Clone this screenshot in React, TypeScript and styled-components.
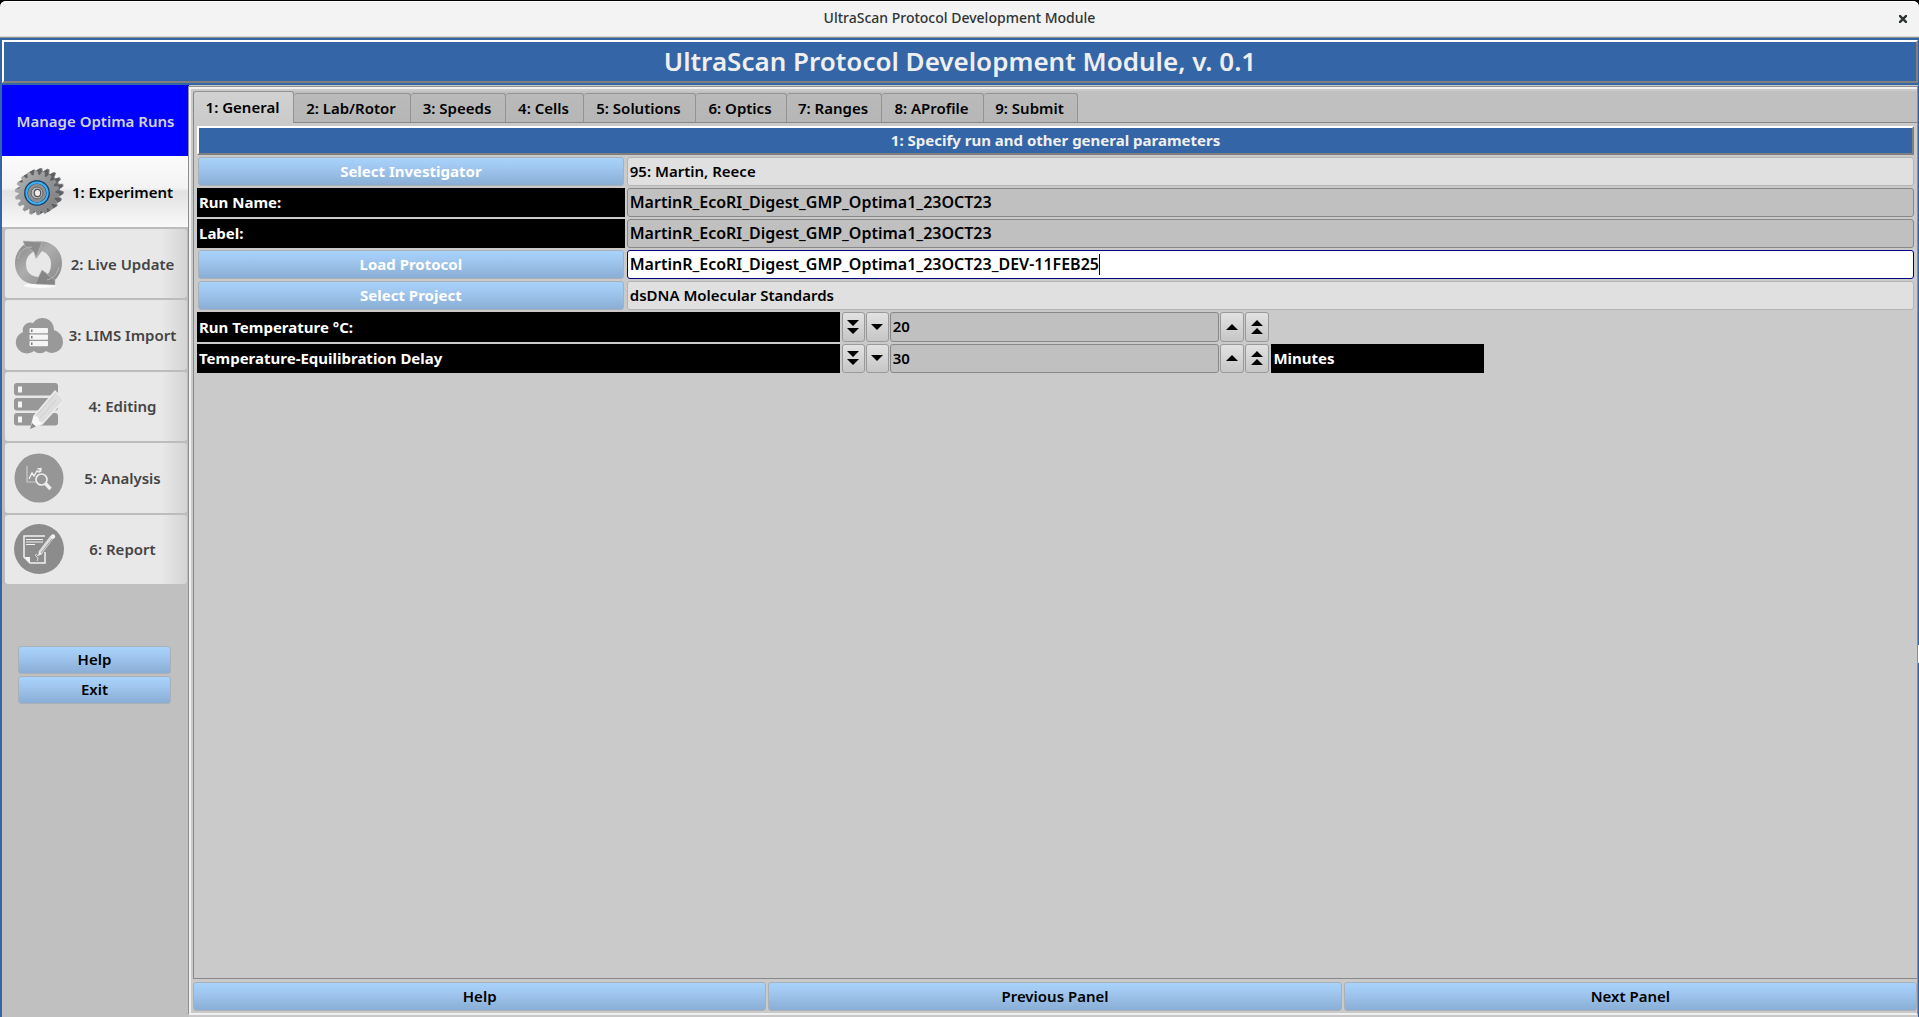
import React from "react";
import styled, { createGlobalStyle, css } from "styled-components";

const GlobalStyle = createGlobalStyle`
  * { box-sizing: border-box; }
  html, body, #root { height: 100%; margin: 0; }
  body {
    background: #000;
    color: #000;
    font: 600 15px/20px "Noto Sans", "Open Sans", sans-serif;
    overflow: hidden;
  }
  button, input { font: inherit; color: inherit; margin: 0; }
  h1, h2, p { margin: 0; }
`;

const Window = styled.div`
  height: 100vh;
  padding-top: 1px;
  display: flex;
  flex-direction: column;
`;

const TitleBar = styled.header`
  height: 37px;
  flex: none;
  display: grid;
  grid-template-columns: 32px 1fr 32px;
  align-items: center;
  justify-items: center;
  background: #f3f3f3;
  border-radius: 6px 6px 0 0;
  border-bottom: 1px solid #8f8f8f;
  box-shadow: inset 0 -1px #d8d8d8, inset 0 1px #fff;
  color: #2e3436;
  font-size: 14px;
  font-weight: 500;
`;

const WindowTitle = styled.p`
  grid-column: 2;
  padding-bottom: 2px;
`;

const CloseButton = styled.button`
  display: flex;
  padding: 4px;
  border: 0;
  background: none;
`;

const Body = styled.div`
  flex: 1;
  min-height: 0;
  display: flex;
  flex-direction: column;
  padding: 2px 1px 0 2px;
  background: #3465a4;
`;

const bevel = css`
  border: 2px solid;
  border-color: #fff #7f7f7f #7f7f7f #fff;
  background: #3465a7;
  color: #efefef;
  display: flex;
  align-items: center;
  justify-content: center;
  padding-bottom: 2px;
`;

const Banner = styled.h1`
  ${bevel}
  height: 43px;
  flex: none;
  margin-bottom: 2px;
  font-size: 26px;
  line-height: 32px;
  font-weight: 600;
`;

const Columns = styled.div`
  flex: 1;
  min-height: 0;
  display: flex;
  position: relative;
  background: #c8c8c8;
`;

const EdgeHandle = styled.span`
  position: absolute;
  top: 560px;
  right: -1px;
  width: 1px;
  height: 18px;
  background: #fff;
`;

const Sidebar = styled.nav`
  width: 187px;
  flex: none;
  display: flex;
  flex-direction: column;
  background: #c0c0c0;
`;

const SidebarTitle = styled.h2`
  height: 71px;
  flex: none;
  display: flex;
  align-items: center;
  justify-content: center;
  background: #0000ff;
  color: #d3d3d3;
  font-size: 15px;
  line-height: 20px;
  font-weight: 600;
`;

const Stages = styled.div`
  flex: none;
  height: 428px;
  display: grid;
  grid-template-rows: 71px repeat(5, 1fr);
  gap: 2px;
  background: #bcbcbc;
`;

const Stage = styled.button<{ $active?: boolean }>`
  display: flex;
  align-items: center;
  margin: 0 2px 0 3px;
  padding: 0 6px 0 9px;
  border: 0;
  border-radius: 3px;
  background: linear-gradient(90deg, #e8e8e8 86%, #d4d4d4);
  color: #444;
  ${(p) =>
    p.$active &&
    css`
      margin: 0;
      padding: 0 8px 0 12px;
      border-radius: 0;
      background: linear-gradient(#fbfbfb, #f3f3f3 45%, #e2e2e2 50%, #f9f9f9);
      color: #000;
    `}
`;

const StageIcon = styled.svg`
  width: 50px;
  height: 50px;
  flex: none;
`;

const StageText = styled.span`
  flex: 1;
  text-align: center;
  white-space: nowrap;
`;

const blueButton = css`
  border: 1px solid #a9b0b8;
  border-radius: 3px;
  background: linear-gradient(#a8d3fb, #9fc5ee 40%, #8aaed5);
  padding: 0 0 2px;
  text-align: center;
`;

const SidebarActions = styled.div`
  display: flex;
  flex-direction: column;
  gap: 2px;
  margin: 62px 18px 0 16px;
`;

const ActionButton = styled.button`
  ${blueButton}
  height: 28px;
`;

const Main = styled.main`
  flex: 1;
  min-width: 0;
  display: flex;
  flex-direction: column;
  background: #cacaca;
  border: solid #f0f0f0;
  border-width: 2px 0 2px 2px;
  box-shadow: -1px -1px #8f8f8f, 1px -1px #8f8f8f;
  margin: 2px 1px 2px 0;
  padding: 2px 0 2px 2px;
`;

const TabBar = styled.div`
  height: 32px;
  flex: none;
  display: flex;
  align-items: flex-end;
  background: #c0c0c0;
  border-bottom: 1px solid #888;
`;

const Tab = styled.button<{ $width: number; $active?: boolean }>`
  width: ${(p) => p.$width}px;
  height: 29px;
  padding: 0 2px 0 0;
  border: 1px solid #939393;
  border-left: 0;
  border-bottom: 0;
  border-radius: 3px 3px 0 0;
  background: linear-gradient(#bababa, #b6b6b6);
  white-space: nowrap;
  ${(p) =>
    p.$active &&
    css`
      height: 32px;
      margin-bottom: -1px;
      padding-bottom: 2px;
      border-left: 1px solid #888;
      background: linear-gradient(#d2d2d2, #cacaca);
    `}
`;

const Panel = styled.section`
  flex: 1;
  min-height: 0;
  padding: 3px 3px 0;
  border-left: 1px solid #888;
  border-bottom: 1px solid #888;
`;

const PanelTitle = styled.h2`
  ${bevel}
  height: 29px;
  margin-bottom: 2px;
  font-size: 15px;
  line-height: 20px;
  font-weight: 700;
`;

const Form = styled.form`
  display: grid;
  grid-template-columns: repeat(8, minmax(0, 1fr));
  grid-auto-rows: 29px;
  gap: 2px;
  padding-bottom: 2px;
`;

const CounterForm = styled(Form)`
  grid-auto-rows: 30px;
`;

const PickButton = styled.button`
  ${blueButton}
  grid-column: span 2;
  margin: 0 1px;
  color: #fff;
  font-weight: 700;
`;

const BlackLabel = styled.label<{ $span: number }>`
  grid-column: span ${(p) => p.$span};
  display: flex;
  align-items: center;
  padding: 0 2px 1px;
  background: #000;
  color: #fff;
  font-weight: 700;
`;

const tones = {
  read: ["#b4b4b4", "#e0e0e0"],
  plain: ["#888", "#c0c0c0"],
  focus: ["#00007f", "#fff"],
};

const FieldBox = styled.div<{ $tone: keyof typeof tones }>`
  grid-column: span 6;
  display: flex;
  align-items: center;
  min-width: 0;
  border: 1px solid ${(p) => tones[p.$tone][0]};
  border-radius: 3px;
  background: ${(p) => tones[p.$tone][1]};
  font-size: ${(p) => (p.$tone === "read" ? 15 : 16)}px;
`;

const FieldInput = styled.input<{ $fit?: boolean }>`
  flex: ${(p) => (p.$fit ? "none" : 1)};
  field-sizing: ${(p) => (p.$fit ? "content" : "fixed")};
  min-width: 0;
  height: 25px;
  padding: 0 0 2px 2px;
  border: 0;
  outline: 0;
  background: transparent;
`;

const Caret = styled.span`
  width: 1px;
  height: 21px;
  background: #000;
`;

const CounterBox = styled.div`
  grid-column: span 2;
  display: grid;
  grid-template-columns: 23px 23px minmax(0, 1fr) 24px 24px;
  gap: 1px;
`;

const StepButton = styled.button`
  display: flex;
  align-items: center;
  justify-content: center;
  padding: 0 0 1px;
  border: 1px solid #9a9a9a;
  border-radius: 3px;
  background: linear-gradient(#e2e2e2, #c6c6c6);
`;

const CounterInput = styled.input`
  min-width: 0;
  padding: 0 2px 2px;
  border: 1px solid #888;
  border-radius: 3px;
  background: #c0c0c0;
  outline: 0;
`;

const Footer = styled.footer`
  flex: none;
  display: grid;
  grid-template-columns: repeat(3, 1fr);
  gap: 2px;
  padding: 3px 0 0;
`;

const FooterButton = styled(ActionButton)`
  height: 29px;
`;

function gearPath(cx: number, cy: number, outer: number, inner: number, teeth: number) {
  const points: string[] = [];
  const step = (Math.PI * 2) / teeth;
  for (let i = 0; i < teeth; i++) {
    [
      [inner, 0],
      [outer, 0.18],
      [outer, 0.52],
      [inner, 0.7],
    ].forEach(([r, t]) => {
      const a = (i + t) * step;
      points.push(`${(cx + r * Math.cos(a)).toFixed(2)} ${(cy + r * Math.sin(a)).toFixed(2)}`);
    });
  }
  return `M${points.join("L")}Z`;
}

const GearIcon = () => (
  <StageIcon viewBox="0 0 50 50" aria-hidden="true">
    <defs>
      <linearGradient id="gearFace" x1="0" y1="0" x2="1" y2="1">
        <stop offset="0" stopColor="#b4b6b7" />
        <stop offset="0.5" stopColor="#929496" />
        <stop offset="1" stopColor="#77797b" />
      </linearGradient>
    </defs>
    {[5, 4, 3, 2, 1].map((d) => (
      <path key={d} d={gearPath(23 + d, 26 - d * 0.6, 22, 18, 18)} fill={d === 5 ? "#8b8d8f" : "#5f6163"} />
    ))}
    <path d={gearPath(23, 26, 22, 18, 18)} fill="url(#gearFace)" stroke="#a5a7a9" strokeWidth="0.5" />
    <circle cx="23" cy="26" r="13" fill="#7d7f82" />
    <circle cx="23" cy="26" r="11" fill="#8d8f91" stroke="#123e66" strokeWidth="3.6" />
    <circle cx="23" cy="26" r="10.6" fill="none" stroke="#41b1f5" strokeWidth="2" />
    <circle cx="23" cy="26" r="6" fill="#b8babb" stroke="#5e6062" />
    <ellipse cx="23.5" cy="26" rx="3.2" ry="3.6" fill="#eee" stroke="#555" strokeWidth="1.2" />
  </StageIcon>
);

const UpdateIcon = () => (
  <StageIcon viewBox="0 0 50 50" aria-hidden="true">
    <defs>
      <linearGradient id="swirl" x1="0" y1="0" x2="1" y2="1">
        <stop offset="0" stopColor="#848484" />
        <stop offset="0.45" stopColor="#adadad" />
        <stop offset="1" stopColor="#858585" />
      </linearGradient>
    </defs>
    <ellipse cx="26" cy="46.5" rx="16" ry="2.5" fill="#fafafa" />
    <path
      fill="url(#swirl)"
      fillRule="evenodd"
      d="M9 2L19 3C36-1 48 10 48 24C48 31 45 37 41 41L41 45L24 45C9 46 1 36 1 24C1 16 5 9 11 5ZM24 12C17 12 12 18 12 25C12 33 17 38 25 38L28 31L34 35C36 32 37 29 37 25C37 18 33 14 28 12L22 20L20 13Z"
    />
    <path d="M9 2L28 3L22 19L20 13L11 7Z" fill="#8d8d8d" stroke="#bdbdbd" strokeWidth="0.6" />
    <path d="M41 46L21 45L28 31L34 36L41 41Z" fill="#858585" stroke="#b8b8b8" strokeWidth="0.6" />
    <path d="M4 20C5 13 10 8 18 8M45 28C43 36 38 40 33 41" fill="none" stroke="#b9b9b9" />
  </StageIcon>
);

const CloudIcon = () => (
  <StageIcon viewBox="0 0 50 50" aria-hidden="true">
    <path
      fill="#999"
      d="M10 43A11 11 0 0 1 9 22A7.5 7.5 0 0 1 19 13A11.5 11.5 0 0 1 40 20A12 12 0 0 1 49 32A11 11 0 0 1 32 41A9 9 0 0 1 20 41A11 11 0 0 1 10 43Z"
    />
    {[18, 24.5, 31].map((y) => (
      <g key={y}>
        <rect x="15.5" y={y} width="18.5" height="5.2" rx="0.8" fill="#f5f5f5" />
        <rect x="17" y={y + 1.5} width="1.5" height="2.4" fill="#777" />
      </g>
    ))}
  </StageIcon>
);

const EditIcon = () => (
  <StageIcon viewBox="0 0 50 50" aria-hidden="true">
    {[2, 17, 32].map((y) => (
      <g key={y}>
        <rect x="0" y={y} width="44" height="12.5" rx="3" fill="#989898" />
        <rect x="4" y={y + 3.5} width="4" height="6" fill="#f4f4f4" />
      </g>
    ))}
    <path d="M17 47L20 35L41 10L50 19L28 43Z" fill="#dedede" stroke="#ececec" strokeWidth="1.5" />
    <path d="M26 37L42 19M23 34L39 16" stroke="#cfcfcf" fill="none" />
    <path d="M17 47L20 35L24 36L25 40L29 42Z" fill="#f8f8f8" />
    <path d="M16 48L18 42L22 45.5Z" fill="#8c8c8c" />
  </StageIcon>
);

const AnalysisIcon = () => (
  <StageIcon viewBox="0 0 50 50" aria-hidden="true">
    <circle cx="25" cy="25" r="24.5" fill="#969696" />
    <g fill="none" stroke="#eee">
      <path d="M13 13V29H23" stroke="#ccc" strokeWidth="1.2" />
      <path d="M15 26L18 20L20 23L23 18L25 19L27 16M23.5 16L27 15.5L26.5 19" strokeWidth="1.4" />
      <circle cx="27.5" cy="26.5" r="5.5" strokeWidth="1.7" />
      <path d="M31.5 30.5L36.5 36" strokeWidth="3.4" />
    </g>
  </StageIcon>
);

const ReportIcon = () => (
  <StageIcon viewBox="0 0 50 50" aria-hidden="true">
    <circle cx="25" cy="25" r="25" fill="#8c8c8c" />
    <g fill="none" stroke="#f2f2f2">
      <path d="M31 12H10V33L16 39H31V28" strokeWidth="1.5" />
      <path d="M12 15.5H29M12 18H29M12 20.5H21" strokeWidth="1" />
      <path d="M26 29L38 13" strokeWidth="4" stroke="#ddd" />
      <path d="M27 29L38 15" strokeWidth="0.8" stroke="#8c8c8c" />
      <path d="M24 32C22 28 20 32 23 33C26 34 21 38 24 36" strokeWidth="0.8" />
    </g>
    <path d="M10 33H16V39Z" fill="#f2f2f2" />
    <path d="M24 32L25 27.5L28 30Z" fill="#f2f2f2" />
    <circle cx="39" cy="12.5" r="2.2" fill="#f2f2f2" />
  </StageIcon>
);

const Arrow = ({ up, double }: { up?: boolean; double?: boolean }) => (
  <svg width="12" height="14" viewBox="0 0 12 14" aria-hidden="true">
    <g transform={up ? "rotate(180 6 7)" : undefined}>
      {double ? <path d="M0 0H12L6 6ZM0 8H12L6 14Z" /> : <path d="M0 4H12L6 10Z" />}
    </g>
  </svg>
);

const stages = [
  { label: "1: Experiment", Icon: GearIcon },
  { label: "2: Live Update", Icon: UpdateIcon },
  { label: "3: LIMS Import", Icon: CloudIcon },
  { label: "4: Editing", Icon: EditIcon },
  { label: "5: Analysis", Icon: AnalysisIcon },
  { label: "6: Report", Icon: ReportIcon },
];

const tabs: [string, number][] = [
  ["1: General", 101],
  ["2: Lab/Rotor", 117],
  ["3: Speeds", 95],
  ["4: Cells", 78],
  ["5: Solutions", 112],
  ["6: Optics", 91],
  ["7: Ranges", 95],
  ["8: AProfile", 102],
  ["9: Submit", 94],
];

type FieldProps = { id: string; value: string; tone: keyof typeof tones; name?: string };

const Field = ({ id, value, tone, name }: FieldProps) => (
  <FieldBox $tone={tone}>
    <FieldInput
      id={id}
      aria-label={name}
      defaultValue={value}
      readOnly={tone === "read"}
      $fit={tone === "focus"}
    />
    {tone === "focus" && <Caret />}
  </FieldBox>
);

const Counter = ({ id, value }: { id: string; value: string }) => (
  <CounterBox>
    <StepButton type="button" aria-label="Large decrease"><Arrow double /></StepButton>
    <StepButton type="button" aria-label="Decrease"><Arrow /></StepButton>
    <CounterInput id={id} defaultValue={value} />
    <StepButton type="button" aria-label="Increase"><Arrow up /></StepButton>
    <StepButton type="button" aria-label="Large increase"><Arrow up double /></StepButton>
  </CounterBox>
);

export default function App() {
  return (
    <>
      <GlobalStyle />
      <Window>
        <TitleBar>
          <WindowTitle>UltraScan Protocol Development Module</WindowTitle>
          <CloseButton aria-label="Close">
            <svg width="8" height="8" viewBox="0 0 8 8" aria-hidden="true">
              <path d="M0 0L8 8M8 0L0 8" stroke="#2e3436" strokeWidth="2.4" />
            </svg>
          </CloseButton>
        </TitleBar>
        <Body>
          <Banner>UltraScan Protocol Development Module, v. 0.1</Banner>
          <Columns>
            <Sidebar>
              <SidebarTitle>Manage Optima Runs</SidebarTitle>
              <Stages>
                {stages.map(({ label, Icon }, i) => (
                  <Stage key={label} $active={i === 0}>
                    <Icon />
                    <StageText>{label}</StageText>
                  </Stage>
                ))}
              </Stages>
              <SidebarActions>
                <ActionButton>Help</ActionButton>
                <ActionButton>Exit</ActionButton>
              </SidebarActions>
            </Sidebar>
            <Main>
              <TabBar role="tablist">
                {tabs.map(([label, width], i) => (
                  <Tab key={label} role="tab" aria-selected={i === 0} $width={width} $active={i === 0}>
                    {label}
                  </Tab>
                ))}
              </TabBar>
              <Panel>
                <PanelTitle>1: Specify run and other general parameters</PanelTitle>
                <Form>
                  <PickButton type="button">Select Investigator</PickButton>
                  <Field id="investigator" name="Investigator" value="95: Martin, Reece" tone="read" />
                  <BlackLabel $span={2} htmlFor="run">Run Name:</BlackLabel>
                  <Field id="run" value="MartinR_EcoRI_Digest_GMP_Optima1_23OCT23" tone="plain" />
                  <BlackLabel $span={2} htmlFor="label">Label:</BlackLabel>
                  <Field id="label" value="MartinR_EcoRI_Digest_GMP_Optima1_23OCT23" tone="plain" />
                  <PickButton type="button">Load Protocol</PickButton>
                  <Field
                    id="protocol"
                    name="Protocol"
                    value="MartinR_EcoRI_Digest_GMP_Optima1_23OCT23_DEV-11FEB25"
                    tone="focus"
                  />
                  <PickButton type="button">Select Project</PickButton>
                  <Field id="project" name="Project" value="dsDNA Molecular Standards" tone="read" />
                </Form>
                <CounterForm>
                  <BlackLabel $span={3} htmlFor="temperature">Run Temperature °C:</BlackLabel>
                  <Counter id="temperature" value="20" />
                </CounterForm>
                <Form>
                  <BlackLabel $span={3} htmlFor="delay">Temperature-Equilibration Delay</BlackLabel>
                  <Counter id="delay" value="30" />
                  <BlackLabel $span={1} htmlFor="delay">Minutes</BlackLabel>
                </Form>
              </Panel>
              <Footer>
                <FooterButton>Help</FooterButton>
                <FooterButton>Previous Panel</FooterButton>
                <FooterButton>Next Panel</FooterButton>
              </Footer>
            </Main>
            <EdgeHandle />
          </Columns>
        </Body>
      </Window>
    </>
  );
}
